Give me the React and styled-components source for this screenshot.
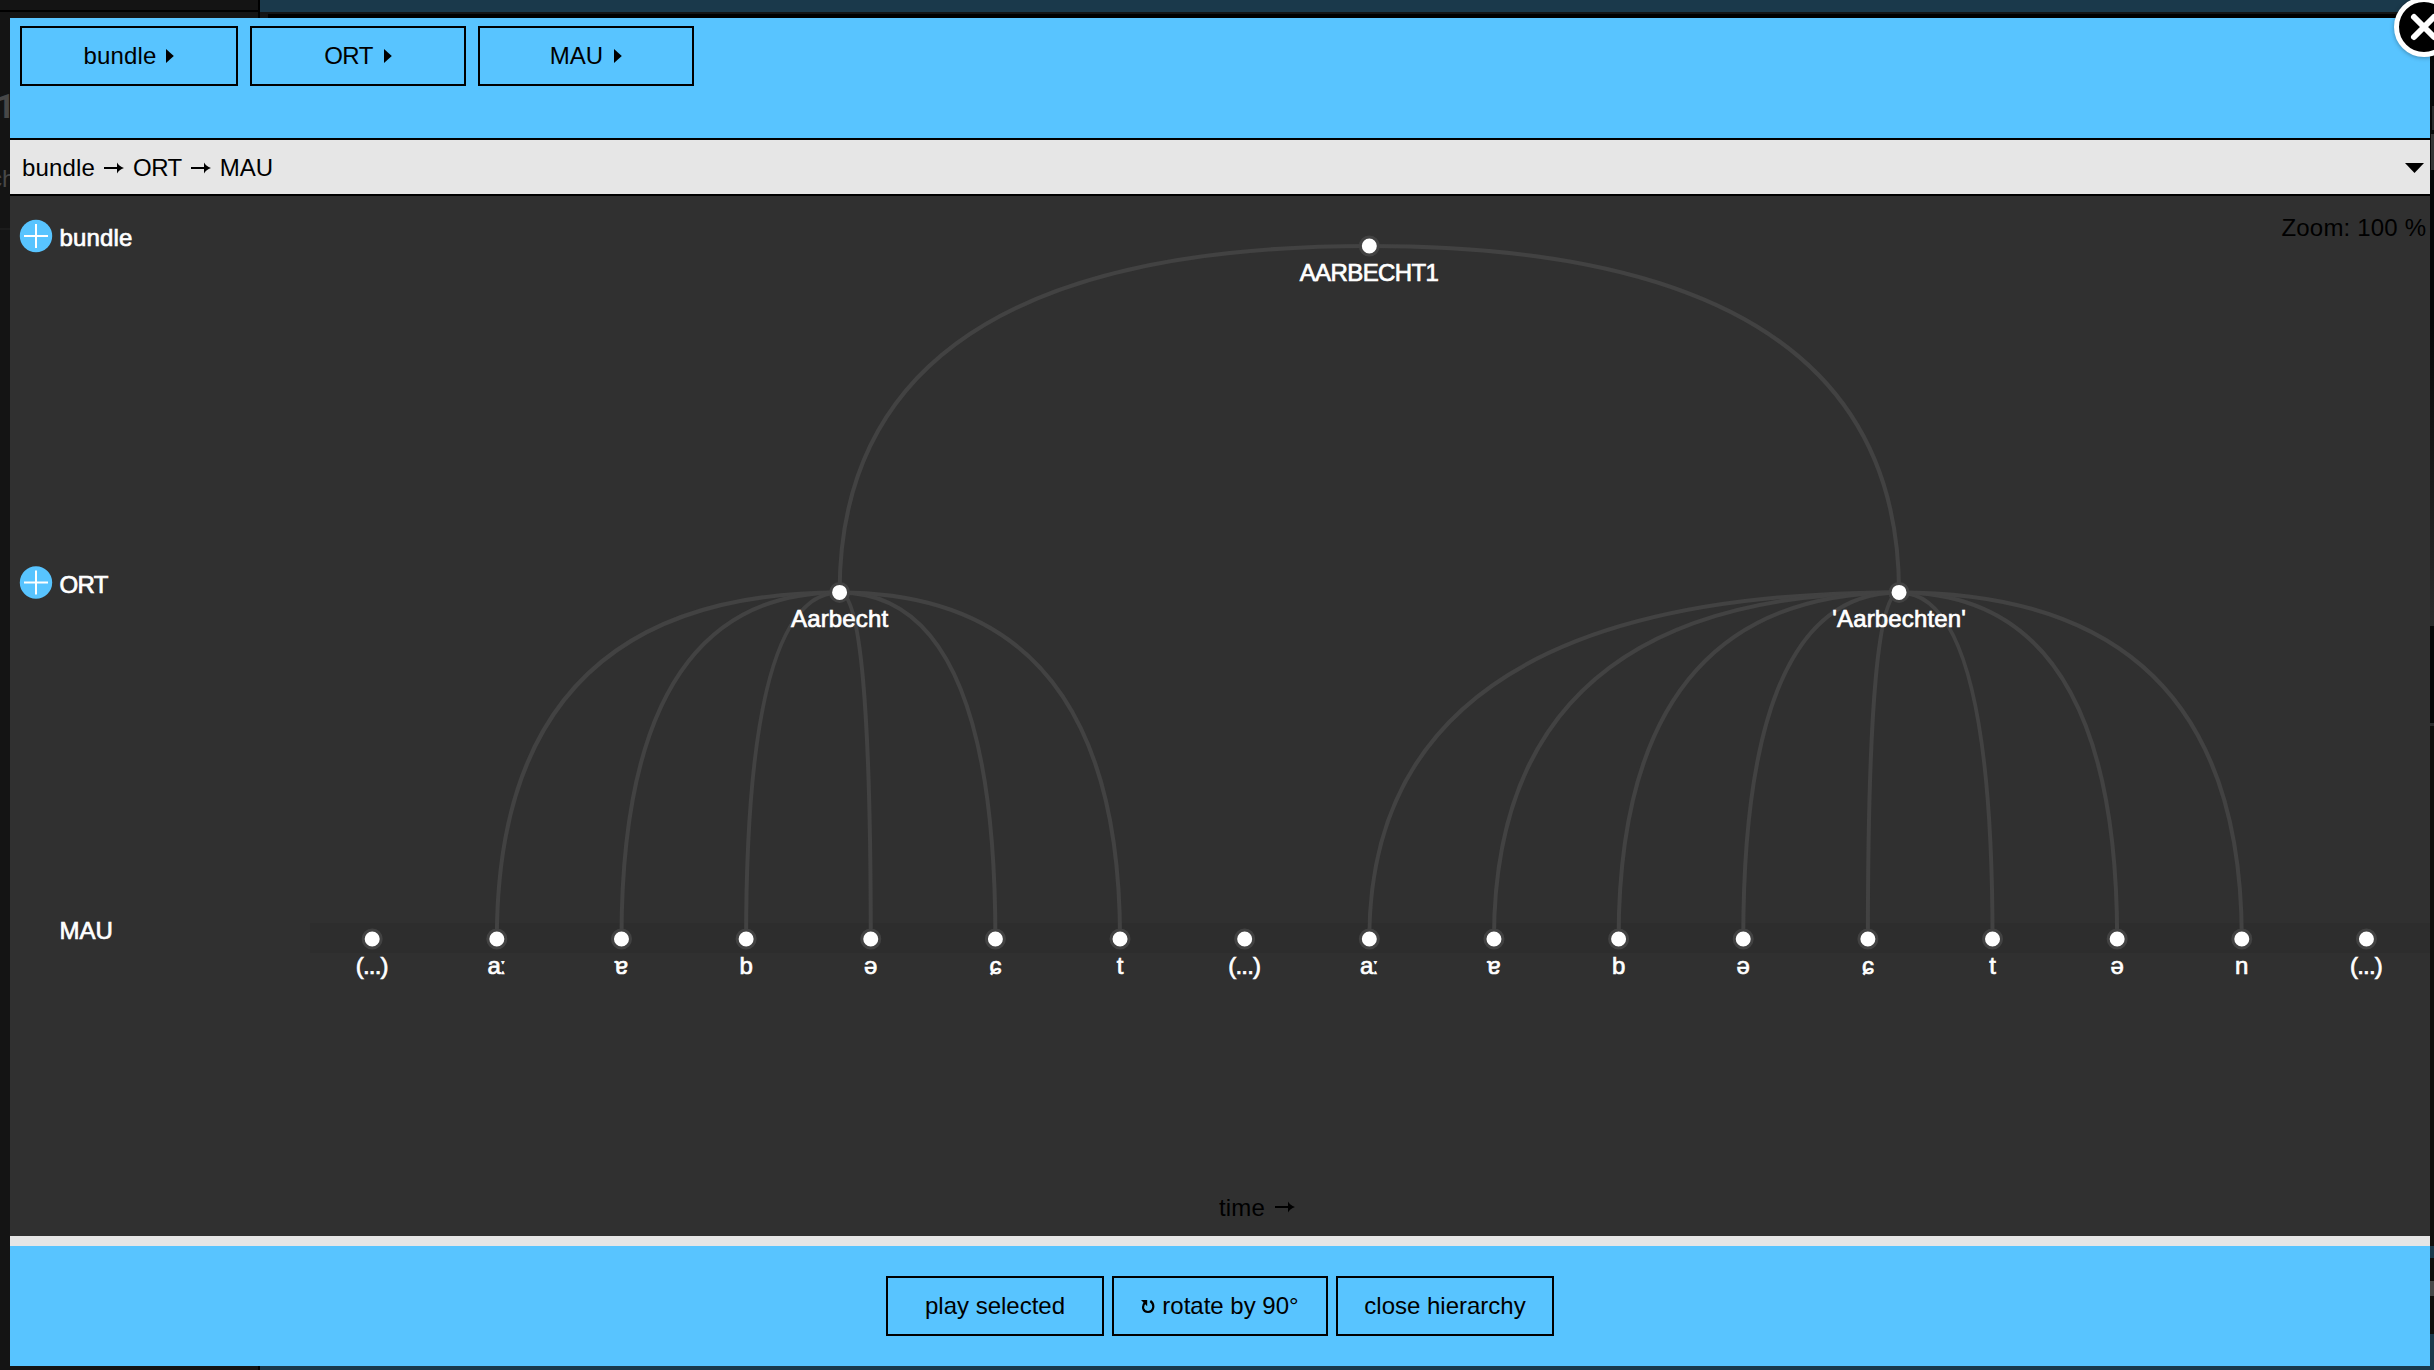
import React from 'react';
import styled, { createGlobalStyle } from 'styled-components';

const FONT = '"Liberation Sans", Arial, "DejaVu Sans", sans-serif';
const BLUE = '#58c4ff';

const Global = createGlobalStyle`
  * { box-sizing: border-box; }
  body { margin: 0; overflow: hidden; background: #141414; font-family: ${FONT}; }
`;

const Page = styled.div`
  position: relative;
  width: 2434px;
  height: 1370px;
  overflow: hidden;
  padding: 18px 4px 4px 10px;
  background: #141414;
`;

const Backdrop = styled.svg`
  position: absolute;
  inset: 0;
  width: 100%;
  height: 100%;
`;

const Modal = styled.main`
  position: relative;
  display: flex;
  flex-direction: column;
  width: 2420px;
  height: 1348px;
  color: #000;
  font-size: 24px;
`;

const TopBar = styled.header`
  display: flex;
  align-items: flex-start;
  gap: 12px;
  height: 120px;
  padding: 8px 10px;
  background: ${BLUE};
`;

const BottomBar = styled.footer`
  display: flex;
  justify-content: center;
  align-items: center;
  gap: 8px;
  height: 120px;
  background: ${BLUE};
`;

const Button = styled.button`
  display: flex;
  align-items: center;
  justify-content: center;
  gap: ${(p) => p.$gap || 0}px;
  width: ${(p) => p.$width || 216}px;
  height: 60px;
  padding: 0;
  border: 2px solid #000;
  background: transparent;
  color: #000;
  font: 24px ${FONT};
  letter-spacing: ${(p) => p.$spacing || 0}px;
  white-space: nowrap;
`;

const PathBar = styled.div`
  display: flex;
  align-items: center;
  justify-content: space-between;
  height: 58px;
  padding: 1px 6px 0 12px;
  border-top: 2px solid #000;
  border-bottom: 2px solid #000;
  background: #e6e6e6;
`;

const PathText = styled.span`
  display: flex;
  align-items: center;
  gap: 9px;
`;

const Level = styled.span`
  letter-spacing: ${(p) => p.$spacing || 0}px;
`;

const Canvas = styled.section`
  height: 1040px;
  background: #303030;
`;

const Graph = styled.svg`
  display: block;
  font-family: ${FONT};
  font-size: 24px;
`;

const NodeLabel = styled.text`
  fill: #fff;
  stroke: #fff;
  stroke-width: 0.7px;
  text-anchor: ${(p) => p.$anchor || 'middle'};
  letter-spacing: ${(p) => p.$spacing || 0}px;
`;

const GraphText = styled.text`
  fill: #000;
  letter-spacing: 0.18px;
`;

const Divider = styled.div`
  height: 10px;
  background: #e6e6e6;
`;

const CloseButton = styled.svg`
  position: absolute;
  left: 2384px;
  top: -13px;
  width: 80px;
  height: 80px;
  filter: drop-shadow(0 1px 2px rgba(0, 0, 0, 0.3));
`;

const Caret = () => (
  <svg width="8" height="14" viewBox="0 0 8 14"><path d="M0 0 7.8 7 0 14Z" /></svg>
);

const arrowPath = 'M0 6.1H13V1.5Q15 5.2 20 7Q15 8.8 13 12.5V7.9H0Z';
const Arrow = () => (
  <svg width="20" height="14" viewBox="0 0 20 14"><path d={arrowPath} /></svg>
);

const RotateIcon = () => (
  <svg width="14" height="16" viewBox="0 0 14 16">
    <path d="M9.3 3C14.2 6.5 12.8 14 7 14C1.8 14 0.6 8.5 4 4.5" fill="none" stroke="#000" strokeWidth="2.2" />
    <path d="M0 2H6.2V8.2Z" />
  </svg>
);

const STEP = 124.64;
const LEAF_Y = 939;
const leafX = (i) => 372.2 + i * STEP;
const leaves = ['(...)', 'aː', 'ɐ', 'b', 'ə', 'ɕ', 't', '(...)', 'aː', 'ɐ', 'b', 'ə', 'ɕ', 't', 'ə', 'n', '(...)'];
const leafSpacing = { '(...)': -0.8, 'aː': -1.4 };
const root = { x: leafX(8), y: 246, label: 'AARBECHT1' };
const words = [
  { x: leafX(3.75), y: 592.4, label: 'Aarbecht', leaves: [1, 2, 3, 4, 5, 6] },
  { x: leafX(12.25), y: 592.4, label: "'Aarbechten'", leaves: [8, 9, 10, 11, 12, 13, 14, 15] },
];

const Link = styled.path`
  fill: none;
  stroke: #424242;
  stroke-width: 4px;
`;

const Dot = styled.circle`
  fill: #fff;
  stroke: #424242;
  stroke-width: 3px;
`;

const link = (a, x, y) => `M${a.x} ${a.y}Q${x} ${a.y} ${x} ${y}`;

const Node = ({ x, y, label, spacing }) => (
  <g>
    <Dot cx={x} cy={y} r="9" />
    <NodeLabel x={x + (spacing || 0) / 2} y={Math.floor(y) + 35} $spacing={spacing}>{label}</NodeLabel>
  </g>
);

const Plus = ({ y }) => (
  <g>
    <circle cx="36" cy={y} r="16.2" fill={BLUE} />
    <path d={`M24 ${y}H48M36 ${y - 12}V${y + 12}`} stroke="#fff" strokeWidth="2" />
  </g>
);

const Hierarchy = () => (
  <Graph width="2420" height="1040" viewBox="10 196 2420 1040">
    <rect x="310" y="923" width="2120" height="30" fill="#2d2d2d" />
    {words.map((w) => <Link key={w.label} d={link(root, w.x, w.y)} />)}
    {words.map((w) => w.leaves.map((i) => <Link key={i} d={link(w, leafX(i), LEAF_Y)} />))}
    <Node {...root} spacing={-0.6} />
    {words.map((w) => <Node key={w.label} {...w} spacing={0.15} />)}
    {leaves.map((label, i) => (
      <Node key={i} x={leafX(i)} y={LEAF_Y} label={label} spacing={leafSpacing[label]} />
    ))}
    <Plus y={236} />
    <Plus y={582.5} />
    <NodeLabel x="59.5" y="246" $anchor="start" $spacing={0.15}>bundle</NodeLabel>
    <NodeLabel x="59.5" y="592.5" $anchor="start" $spacing={-0.6}>ORT</NodeLabel>
    <NodeLabel x="59.5" y="939" $anchor="start">MAU</NodeLabel>
    <GraphText x="2281.5" y="236">Zoom: 100 %</GraphText>
    <GraphText x="1219" y="1216">time</GraphText>
    <path transform="translate(1275 1200)" d={arrowPath} />
  </Graph>
);

const AppBehind = () => (
  <Backdrop viewBox="0 0 2434 1370">
    <defs>
      <linearGradient id="edge" x1="0" y1="0" x2="0" y2="1">
        <stop offset="0" stopColor="#080808" />
        <stop offset="1" stopColor="#2b2b2b" />
      </linearGradient>
    </defs>
    <rect x="0" y="10" width="260" height="2" />
    <rect x="258" width="2" height="18" />
    <rect x="260" width="2174" height="12" fill="#1a394b" />
    <rect x="268" y="14" width="2166" height="4" />
    <text x="-4" y="118" fontFamily="Roboto, sans-serif" fontSize="33" fontWeight="bold" fill="#484848">1</text>
    <text x="-10" y="187" fontSize="24" fill="#484848">ch</text>
    <rect x="0" y="228" width="10" height="2" fill="#1c1c1c" />
    <rect x="2430" y="56" width="4" height="1190" fill="#080808" />
    <rect x="2432" y="106" width="2" height="24" fill="#2c2c2c" />
    <rect x="2431" y="134" width="3" height="36" fill="#363636" />
    <rect x="2430" y="323" width="4" height="303" fill="url(#edge)" />
    <rect x="2430" y="723" width="4" height="3" fill="#2c2c2c" />
    <rect x="2430" y="726" width="4" height="520" fill="#100f0c" />
    <rect x="2430" y="1246" width="4" height="124" fill="#1a394b" />
    <rect x="2430" y="1258" width="4" height="76" fill="#100f0c" />
    <rect x="2430" y="1281" width="4" height="15" fill="#484848" />
    <rect x="258" y="1366" width="2" height="4" />
    <rect x="260" y="1366" width="2174" height="4" fill="#1a394b" />
  </Backdrop>
);

export default function App() {
  return (
    <Page>
      <Global />
      <AppBehind />
      <Modal>
        <TopBar>
          <Button $width={218} $gap={10} $spacing={0.15}>bundle <Caret /></Button>
          <Button $gap={11} $spacing={-0.5}>ORT <Caret /></Button>
          <Button $gap={11}>MAU <Caret /></Button>
        </TopBar>
        <PathBar>
          <PathText>
            <Level $spacing={0.15}>bundle</Level>
            <Arrow />
            <Level $spacing={-0.5}>ORT</Level>
            <Arrow />
            <Level>MAU</Level>
          </PathText>
          <svg width="19" height="12" viewBox="0 0 19 12"><path d="M0 1H19L9.5 11Z" /></svg>
        </PathBar>
        <Canvas><Hierarchy /></Canvas>
        <Divider />
        <BottomBar>
          <Button $width={218}>play selected</Button>
          <Button $gap={7}><RotateIcon /> rotate by 90°</Button>
          <Button $width={218}>close hierarchy</Button>
        </BottomBar>
      </Modal>
      <CloseButton viewBox="0 0 80 80">
        <circle cx="40" cy="40" r="27.5" stroke="#fff" strokeWidth="5" />
        <path d="M30 30 50 50M50 30 30 50" stroke="#fff" strokeWidth="6" strokeLinecap="round" />
      </CloseButton>
    </Page>
  );
}
